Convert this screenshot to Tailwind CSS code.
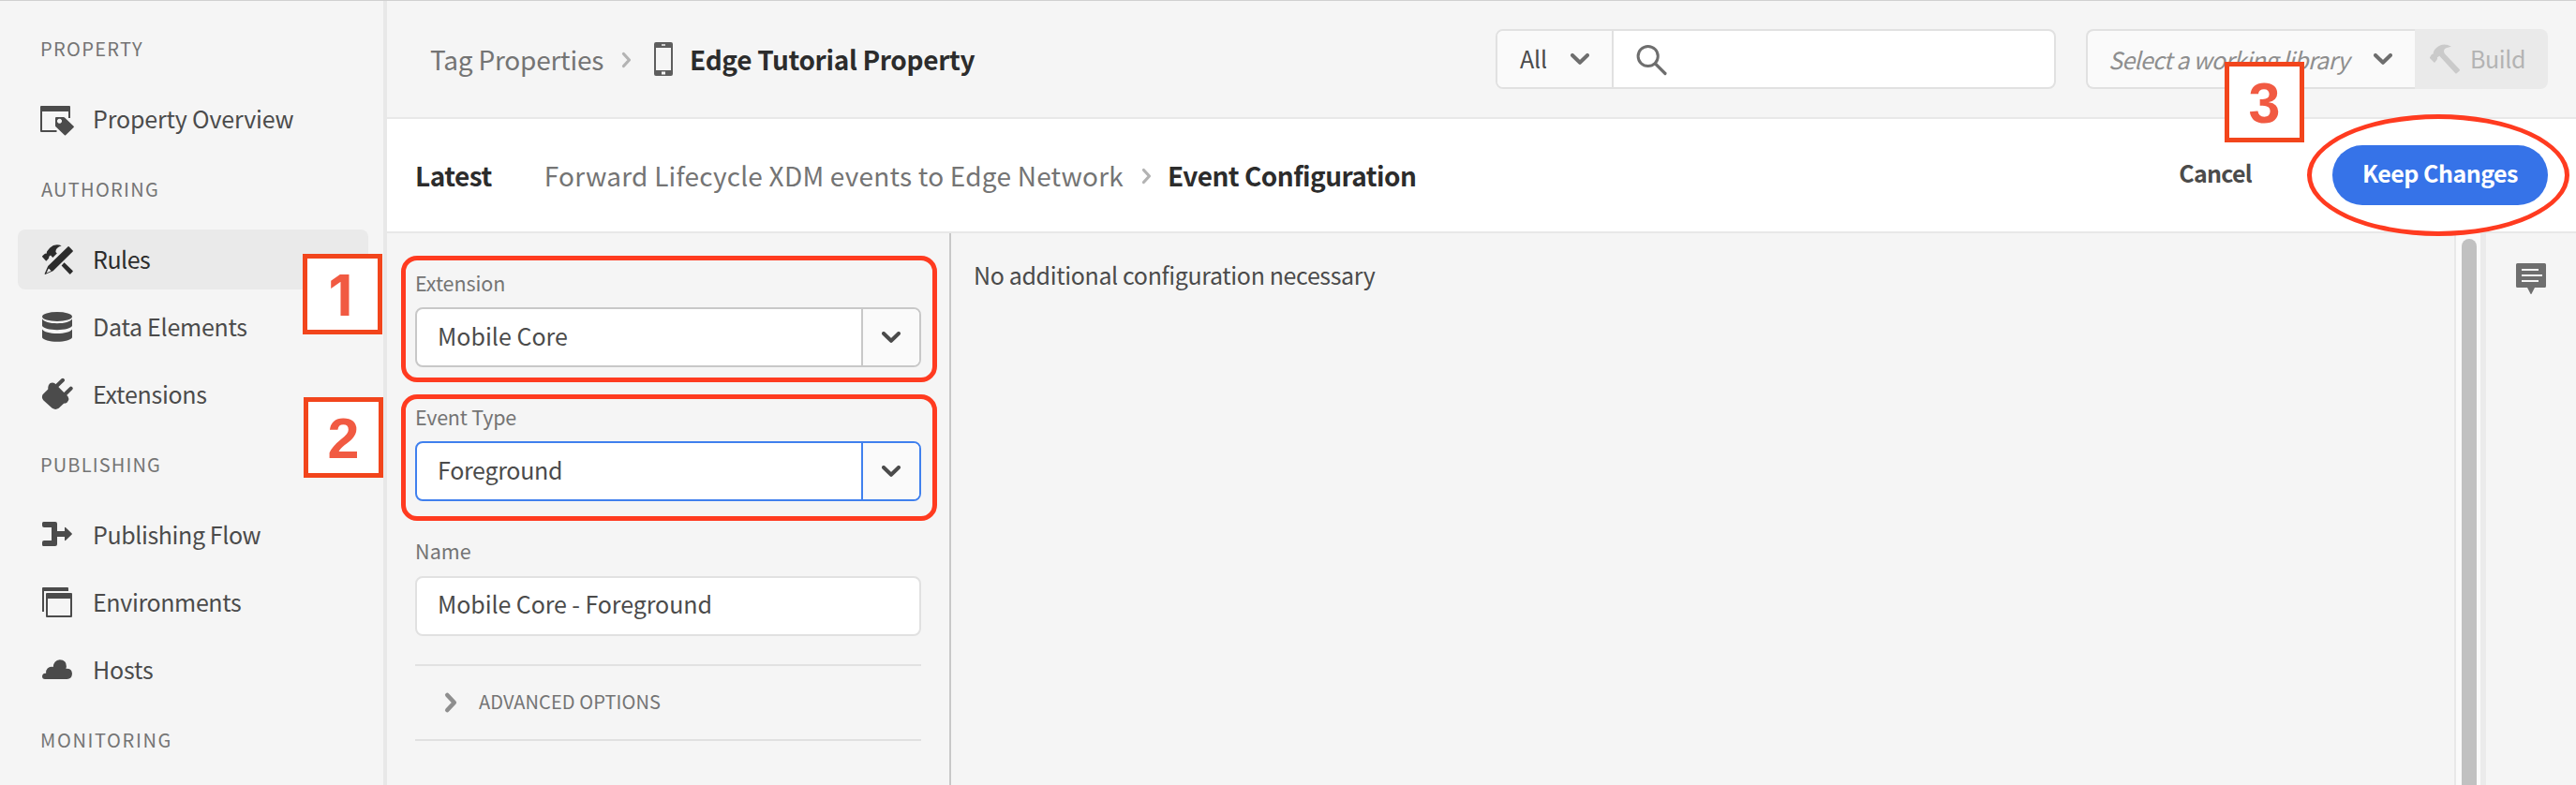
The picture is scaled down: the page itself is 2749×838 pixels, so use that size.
<!DOCTYPE html>
<html lang="en">
<head>
<meta charset="utf-8">
<title>Event Configuration</title>
<script src="https://cdn.jsdelivr.net/npm/@tailwindcss/browser@4"></script>
</head>
<body class="relative flex h-[838px] w-[2749px] flex-col overflow-hidden whitespace-nowrap border-t border-[#d0d0d0] bg-[#f5f5f5] font-['Noto_Sans_CJK_SC',sans-serif] text-[25px] leading-none text-[#4b4b4b]">
<div class="flex min-h-0 flex-1">

  <!-- Sidebar -->
  <nav class="flex w-[413px] shrink-0 flex-col border-r-4 border-[#e8e8e8]">
    <h2 class="flex h-[94px] items-center pl-[43px] pt-[7px] text-[20px] tracking-[1.33px] text-[#747474]">PROPERTY</h2>
    <a class="mx-[19px] flex h-16 w-[374px] shrink-0 items-center pl-6">
      <svg class="size-9 shrink-0" viewBox="0 0 36 36" fill="#4b4b4b"><path fill-rule="evenodd" d="M1 4h30q1 0 1 1v12h-2v-7H2v20h15.500v2H1q-1 0-1-1V5q0-1 1-1z"/><path fill-rule="evenodd" d="M17 16h7.800q.7 0 1.200.5l9.600 9.300q.6.6 0 1.200l-8.500 8.300q-.6.6-1.200 0l-9.400-9.100q-.5-.5-.5-1.200v-8q0-1 1-1zM20.500 17.800a2.500 2.500 0 1 0 .01 0z"/></svg>
      <span class="ml-[20px] pb-0.5 tracking-[-0.16px]">Property Overview</span>
    </a>
    <h2 class="flex h-[86px] items-center pb-px pl-[44px] text-[20px] tracking-[1.3px] text-[#747474]">AUTHORING</h2>
    <div class="mx-[19px] flex w-[374px] flex-col gap-2">
      <a class="flex h-16 items-center rounded-lg bg-[#eaeaea] pl-6 text-[#2c2c2c]">
        <svg class="size-9 shrink-0" viewBox="0 0 36 36" fill="#2c2c2c"><path d="M29.600 4.200q.5-.5 1 0l4.100 4.300q.5.500 0 1L13.600 30.300 5.600 33.800q-1.200.4-.9-.8L8.200 24.900zM8.700 27.800l-2.200 4.700 5-2.200q-.3-1.400-1.400-1.500 0-1-1.400-1z" fill-rule="evenodd"/><path d="M22.700 3.300Q15.500.500 10.300 5.600L7.400 9q-1 1.400-.4 2.600-1.600-.3-2.600.6L2.200 14.300q-.4.5 0 1l3.600 4q.5.500 1 0l2-2.200q.8-1 .4-2.200l1.800-1.300 2.300 2.300 4.500-4.500-1.400-1.500q-.2-4.600 6.300-6.600z"/><path d="M25.600 21.300l9 8.600q.5.500 0 1l-2.400 2.600q-.5.500-1 0l-8.600-9z"/></svg>
        <span class="ml-[20px] pb-0.5 tracking-[-0.5px]">Rules</span>
      </a>
      <a class="flex h-16 items-center pl-6">
        <svg class="size-9 shrink-0" viewBox="0 0 36 36" fill="#4b4b4b"><ellipse cx="18" cy="7" rx="16" ry="5"/><path d="M2 9.500c2 3 8 4.700 16 4.700s14-1.700 16-4.700v7.300c-1 2.700-8 4.400-16 4.400S3 19.500 2 16.800z"/><path d="M2 20.500c2 2.800 8 4.500 16 4.500s14-1.700 16-4.500v8.800c-1 2.700-8 4.500-16 4.500S3 32 2 29.300z"/></svg>
        <span class="ml-[20px] pb-0.5 tracking-[-0.26px]">Data Elements</span>
      </a>
      <a class="flex h-16 items-center pl-6">
        <svg class="size-9 shrink-0" viewBox="0 0 36 36" fill="#4b4b4b"><path d="M8.300 12.500q-.4-4.300 2.300-6.500 2.800-1.400 5.200.6l13.700 13.600q1.400 2.400.4 4.600-1.300 3.200-4.600 2.800l-5.600 5.200q-3.500 2.300-7 0l-9.200-8.300q-2.600-2.800-1-6.300z"/><path d="M17 9.500l7-6.700M25.700 18.500l7-6.900" stroke="#4b4b4b" stroke-width="4" stroke-linecap="round"/></svg>
        <span class="ml-[20px] pb-0.5 tracking-[-0.27px]">Extensions</span>
      </a>
    </div>
    <h2 class="flex h-[86px] items-center pb-px pl-[43px] text-[20px] tracking-[1.14px] text-[#747474]">PUBLISHING</h2>
    <div class="mx-[19px] flex w-[374px] flex-col gap-2">
      <a class="flex h-16 items-center pl-6">
        <svg class="size-9 shrink-0" viewBox="0 0 36 36" fill="#4b4b4b"><path d="M3.500 4H16q2 0 2 2v8h8v-3.200q0-1.600 1.200-.5l6.500 6.200q.5.500 0 1l-6.500 6.200q-1.200 1.100-1.200-.5V20h-8v8q0 2-2 2H3.500Q2 30 2 28.500V26q0-2 2-2h8V10H4Q2 10 2 8V5.500Q2 4 3.500 4z"/></svg>
        <span class="ml-[20px] pb-0.5 tracking-[-0.39px]">Publishing Flow</span>
      </a>
      <a class="flex h-16 items-center pl-6">
        <svg class="size-9 shrink-0" viewBox="0 0 36 36" fill="#4b4b4b"><path d="M3 2h26q1 0 1 1v3H4v22H2V3q0-1 1-1z"/><path fill-rule="evenodd" d="M7 8h26q1 0 1 1v24q0 1-1 1H7q-1 0-1-1V9q0-1 1-1zM8 14v18h24V14z"/></svg>
        <span class="ml-[20px] pb-0.5 tracking-[-0.37px]">Environments</span>
      </a>
      <a class="flex h-16 items-center pl-6">
        <svg class="size-9 shrink-0" viewBox="0 0 36 36" fill="#4b4b4b"><path d="M28.500 28H5q-3-.2-3-3 .2-3 3.200-3.200h.9q-.5-3.300 1.600-5.400 2.500-2.400 6-1.400.8-7.200 7-7.700 7.400.2 7.200 7.300l-.5 2.300q6.300-.4 6.600 5.300-.4 5.600-5.500 5.800z"/></svg>
        <span class="ml-[20px] pb-0.5 tracking-[-0.16px]">Hosts</span>
      </a>
    </div>
    <h2 class="flex h-[86px] items-center pb-px pl-[43px] text-[20px] tracking-[1.65px] text-[#747474]">MONITORING</h2>
  </nav>

  <div class="flex min-w-0 flex-1 flex-col">
    <!-- Top header -->
    <header class="flex h-[126px] shrink-0 items-center border-b-2 border-[#e8e8e8] pl-[46px] pr-[30px] text-[28px]">
      <span class="tracking-[-0.22px] text-[#747474]">Tag Properties</span>
      <svg class="ml-[19px] mt-0.5 h-5 w-3 shrink-0" viewBox="0 0 12 20" fill="none" stroke="#b3b3b3" stroke-width="3.200" stroke-linecap="round" stroke-linejoin="round"><path d="M2.500 3.500L8.500 10l-6 6.500"/></svg>
      <svg class="ml-[23px] h-9 w-5 shrink-0" viewBox="0 0 20 36" fill="#5e5e5e"><path fill-rule="evenodd" d="M2 0h16q2 0 2 2v32q0 2-2 2H2q-2 0-2-2V2q0-2 2-2zM2 6v24h16V6zM8 2.200v1.600h4V2.200zM8 31.500v3h4v-3z"/></svg>
      <h1 class="ml-[18px] font-bold tracking-[-0.33px] text-[#2c2c2c]">Edge Tutorial Property</h1>

      <div class="ml-auto flex h-16 w-[598px] overflow-hidden rounded-lg border-2 border-[#e1e1e1] bg-white text-[25px]">
        <div class="flex w-[124px] items-center justify-between border-r-2 border-[#e1e1e1] bg-[#fafafa] pl-6 pr-6">
          <span class="pb-0.5 tracking-[-0.15px]">All</span>
          <svg class="h-3 w-5" viewBox="0 0 20 12" fill="none" stroke="#6e6e6e" stroke-width="4" stroke-linecap="round" stroke-linejoin="round"><path d="M2 2l8 7.800L18 2"/></svg>
        </div>
        <svg class="ml-6 mt-[13px] size-9" viewBox="0 0 36 36" fill="none" stroke="#6e6e6e"><circle cx="12.700" cy="14" r="10.600" stroke-width="3"/><path d="M20.500 22l10.500 10.500" stroke-width="3.200" stroke-linecap="round"/></svg>
      </div>
      <div class="ml-8 flex h-16 w-[493px] text-[25px]">
        <div class="flex w-[351px] items-center justify-between rounded-l-lg border-y-2 border-l-2 border-[#e1e1e1] bg-[#fafafa] pl-[22px] pr-6">
          <span class="italic tracking-[-0.7px] text-[#8e8e8e]">Select a working library</span>
          <svg class="h-3 w-5" viewBox="0 0 20 12" fill="none" stroke="#6e6e6e" stroke-width="4" stroke-linecap="round" stroke-linejoin="round"><path d="M2 2l8 7.800L18 2"/></svg>
        </div>
        <div class="flex flex-1 items-center rounded-r-lg bg-[#eaeaea] pl-[14px] text-[#b3b3b3]">
          <svg class="size-9" viewBox="0 0 36 36" fill="#cacaca"><path d="M25 4.700Q17 .2 11 4.500 5.500 8.500 5.700 12.500 4.500 12.500 3.500 13.800L2 16.200q-.3.500.2 1l4.200 4.200q.5.500 1 0l2.200-2.700q.8-1.200.3-2.400l2.400-1.600 17 18.600q.7.600 1.400 0l3-2.900q.6-.6 0-1.300L17.800 12.200q-2.200-4.200 1.600-6 2.400-.8 5.600-1.500z"/></svg>
          <span class="ml-[9px] pb-px tracking-[-0.39px]">Build</span>
        </div>
      </div>
    </header>

    <!-- Rule breadcrumb bar -->
    <div class="flex h-[122px] shrink-0 items-center border-b-2 border-[#e8e8e8] bg-white pl-[30px] pr-[30px] text-[28px]">
      <span class="font-bold tracking-[-0.5px] text-[#2c2c2c]">Latest</span>
      <span class="ml-[56px] tracking-[0.23px] text-[#747474]">Forward Lifecycle XDM events to Edge Network</span>
      <svg class="ml-[19px] mt-0.5 h-5 w-3 shrink-0" viewBox="0 0 12 20" fill="none" stroke="#b3b3b3" stroke-width="3.200" stroke-linecap="round" stroke-linejoin="round"><path d="M2.500 3.500L8.500 10l-6 6.500"/></svg>
      <span class="ml-[16px] font-bold tracking-[-0.53px] text-[#2c2c2c]">Event Configuration</span>
      <button class="ml-auto mr-[86px] pb-[5px] text-[25px] font-bold tracking-[-0.73px]">Cancel</button>
      <button class="flex h-16 w-[230px] items-center justify-center rounded-full bg-[#3673e8] pb-[5px] text-[25px] font-bold tracking-[-0.52px] text-white">Keep Changes</button>
    </div>

    <div class="flex min-h-0 flex-1">
      <!-- Event form -->
      <form class="flex w-[602px] shrink-0 flex-col border-r-2 border-[#c8c8c8] pl-[30px] pr-[30px] pt-[27px]">
        <label class="flex h-[52px] items-center text-[21.5px] tracking-[-0.08px] text-[#747474]">Extension</label>
        <div class="flex h-16 overflow-hidden rounded-lg border-2 border-[#c8c8c8] bg-white">
          <span class="flex flex-1 items-center pb-[3px] pl-[22px] tracking-[0.02px]">Mobile Core</span>
          <span class="flex w-[62px] items-center justify-center border-l-2 border-[#c8c8c8] bg-[#fafafa]"><svg class="h-3 w-5" viewBox="0 0 20 12" fill="none" stroke="#4b4b4b" stroke-width="4" stroke-linecap="round" stroke-linejoin="round"><path d="M2 2l8 7.800L18 2"/></svg></span>
        </div>
        <label class="mt-[27px] flex h-[52px] items-center text-[21.5px] tracking-[-0.2px] text-[#747474]">Event Type</label>
        <div class="flex h-16 overflow-hidden rounded-lg border-2 border-[#4080ee] bg-white">
          <span class="flex flex-1 items-center pb-[4px] pl-[22px] tracking-[-0.3px]">Foreground</span>
          <span class="flex w-[62px] items-center justify-center border-l-2 border-[#4080ee] bg-[#fafafa]"><svg class="h-3 w-5" viewBox="0 0 20 12" fill="none" stroke="#4b4b4b" stroke-width="4" stroke-linecap="round" stroke-linejoin="round"><path d="M2 2l8 7.800L18 2"/></svg></span>
        </div>
        <label class="mt-7 flex h-[52px] items-center pb-0.5 text-[21.5px] tracking-[0.1px] text-[#747474]">Name</label>
        <div class="flex h-16 items-center rounded-lg border-2 border-[#e1e1e1] bg-white pb-[5px] pl-[22px] tracking-[-0.08px]">Mobile Core - Foreground</div>
        <div class="mt-[30px] flex h-[82px] items-center border-y-2 border-[#e1e1e1] pl-[31px]">
          <svg class="h-6 w-[15px]" viewBox="0 0 15 24" fill="none" stroke="#8e8e8e" stroke-width="4.600" stroke-linecap="round" stroke-linejoin="round"><path d="M3.300 4l7.500 8-7.500 8"/></svg>
          <span class="ml-[22px] pb-[3px] text-[20px] tracking-[0.11px] text-[#747474]">ADVANCED OPTIONS</span>
        </div>
      </form>

      <!-- Configuration area -->
      <main class="flex-1 pl-[24px] pt-[32px] tracking-[-0.37px]">No additional configuration necessary</main>

      <!-- Scrollbar -->
      <div class="w-[34px] shrink-0 border-l-2 border-r-6 border-l-[#e8e8e8] border-r-[#ebebeb] bg-[#fafafa] pl-[6px] pt-[6px]">
        <div class="h-full w-4 rounded-t-full bg-[#c1c1c1]"></div>
      </div>

      <!-- Right rail -->
      <aside class="w-24 shrink-0 pl-8 pt-[32px]">
        <svg class="h-[34px] w-8" viewBox="0 0 32 34" fill="#6e6e6e"><path d="M1.500 0h29q1.500 0 1.500 1.500v23q0 1.500-1.500 1.500H20l-3.500 6.700q-.5.800-1 0L12 26H1.500Q0 26 0 24.500v-23Q0 0 1.500 0z"/><path d="M6 7h18M6 13h22M6 19h18" stroke="#f5f5f5" stroke-width="2"/></svg>
      </aside>
    </div>
  </div>
</div>

<!-- Annotations -->
<div class="absolute left-[428px] top-[272px] h-[135px] w-[572px] rounded-[17px] border-5 border-[#ff3b20]"></div>
<div class="absolute left-[428px] top-[420px] h-[135px] w-[572px] rounded-[17px] border-5 border-[#ff3b20]"></div>
<div class="absolute left-[2462px] top-[121px] h-[130px] w-[280px] rounded-[50%] border-5 border-[#ff3b20]"></div>
<div class="absolute left-[323px] top-[270px] flex h-[86px] w-[85px] items-center justify-center border-5 border-[#f2451c] bg-white pr-1 pt-0.5 font-[Inter,sans-serif] text-[60px] font-bold text-[#f15a42]">1</div>
<div class="absolute left-[324px] top-[423px] flex h-[86px] w-[85px] items-center justify-center border-5 border-[#f2451c] bg-white pt-[3px] font-['Liberation_Sans',sans-serif] text-[61px] font-bold text-[#f15a42]">2</div>
<div class="absolute left-[2374px] top-[65px] flex h-[86px] w-[85px] items-center justify-center border-5 border-[#f2451c] bg-white pt-[3px] font-['Liberation_Sans',sans-serif] text-[61px] font-bold text-[#f15a42]">3</div>
</body>
</html>
